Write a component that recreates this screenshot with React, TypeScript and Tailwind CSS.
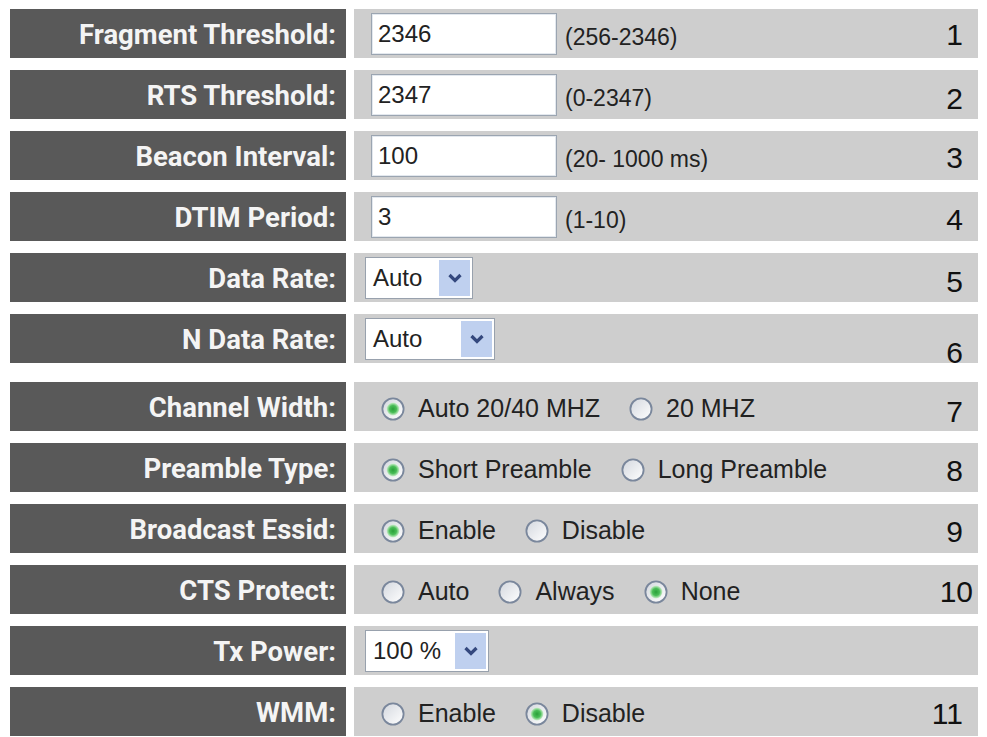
import React from 'react';

type Control =
  | { kind: 'text'; value: string; hint: string }
  | { kind: 'select'; value: string; width: string }
  | { kind: 'radio'; options: { label: string; checked: boolean }[] };

type Row = {
  label: string;
  control: Control;
  num?: string;
  numCls?: string;
  rowCls?: string;
};

const rows: Row[] = [
  { label: 'Fragment Threshold:', control: { kind: 'text', value: '2346', hint: '(256-2346)' }, num: '1', numCls: 'translate-y-[1px]' },
  { label: 'RTS Threshold:', control: { kind: 'text', value: '2347', hint: '(0-2347)' }, num: '2', numCls: 'translate-y-[4px]' },
  { label: 'Beacon Interval:', control: { kind: 'text', value: '100', hint: '(20- 1000 ms)' }, num: '3', numCls: 'translate-y-[2px]' },
  { label: 'DTIM Period:', control: { kind: 'text', value: '3', hint: '(1-10)' }, num: '4', numCls: 'translate-y-[3px]' },
  { label: 'Data Rate:', control: { kind: 'select', value: 'Auto', width: 'w-[108px]' }, num: '5', numCls: 'translate-y-[4px]' },
  { label: 'N Data Rate:', control: { kind: 'select', value: 'Auto', width: 'w-[130px]' }, num: '6', numCls: 'translate-y-[14px]' },
  {
    label: 'Channel Width:',
    control: { kind: 'radio', options: [{ label: 'Auto 20/40 MHZ', checked: true }, { label: '20 MHZ', checked: false }] },
    num: '7',
    numCls: 'translate-y-[5px]',
    rowCls: 'mt-[7px]',
  },
  {
    label: 'Preamble Type:',
    control: { kind: 'radio', options: [{ label: 'Short Preamble', checked: true }, { label: 'Long Preamble', checked: false }] },
    num: '8',
    numCls: 'translate-y-[3px]',
  },
  {
    label: 'Broadcast Essid:',
    control: { kind: 'radio', options: [{ label: 'Enable', checked: true }, { label: 'Disable', checked: false }] },
    num: '9',
    numCls: 'translate-y-[3px]',
  },
  {
    label: 'CTS Protect:',
    control: {
      kind: 'radio',
      options: [
        { label: 'Auto', checked: false },
        { label: 'Always', checked: false },
        { label: 'None', checked: true },
      ],
    },
    num: '10',
    numCls: 'translate-y-[2px] translate-x-[10px]',
  },
  { label: 'Tx Power:', control: { kind: 'select', value: '100 %', width: 'w-[124px]' } },
  {
    label: 'WMM:',
    control: { kind: 'radio', options: [{ label: 'Enable', checked: false }, { label: 'Disable', checked: true }] },
    num: '11',
    numCls: 'translate-y-[2px]',
  },
];

const Radio: React.FC<{ checked: boolean }> = ({ checked }) => (
  <svg width="24" height="24" viewBox="0 0 24 24" className="shrink-0">
    <defs>
      <linearGradient id="rfill" x1="0" y1="0" x2="1" y2="1">
        <stop offset="0" stopColor="#d3d7de" />
        <stop offset="1" stopColor="#ffffff" />
      </linearGradient>
      <radialGradient id="rdot" cx="0.5" cy="0.5" r="0.5">
        <stop offset="0" stopColor="#2a9f3a" />
        <stop offset="0.55" stopColor="#49bd57" />
        <stop offset="1" stopColor="#cdeecd" />
      </radialGradient>
    </defs>
    <circle cx="12" cy="12" r="10.6" fill="url(#rfill)" stroke="#7a879c" strokeWidth="1.8" />
    {checked && <circle cx="12" cy="12" r="6.4" fill="url(#rdot)" />}
  </svg>
);

const ValueCell: React.FC<{ control: Control }> = ({ control }) => {
  if (control.kind === 'text') {
    return (
      <div className="flex items-center ml-[6px]">
        <div className="w-[186px] h-[42px] bg-white border border-[#9ba5b1] shadow-[inset_0_0_0_1px_#e3e8ee] flex items-center pl-[6px] text-[24px]">
          {control.value}
        </div>
        <span className="ml-[8px] mt-[8px] text-[23px]">{control.hint}</span>
      </div>
    );
  }
  if (control.kind === 'select') {
    return (
      <div className={`${control.width} h-[42px] bg-white border border-[#98a1ad] flex items-stretch text-[24px]`}>
        <span className="flex-1 flex items-center pl-[7px]">{control.value}</span>
        <span className="w-[31px] m-[2px] bg-[#bfd0ef] flex items-center justify-center">
          <svg width="16" height="12" viewBox="0 0 16 12">
            <path d="M2.5 3 L8 8.5 L13.5 3" fill="none" stroke="#34487e" strokeWidth="3.2" />
          </svg>
        </span>
      </div>
    );
  }
  return (
    <div className="flex items-center gap-[29px] ml-[16px] mt-[4px] text-[25px]">
      {control.options.map((o) => (
        <label key={o.label} className="flex items-center gap-[13px]">
          <Radio checked={o.checked} />
          <span>{o.label}</span>
        </label>
      ))}
    </div>
  );
};

const App: React.FC = () => {
  return (
    <div className="w-[987px] h-[737px] bg-white pt-[9px] pl-[10px] overflow-hidden">
      <div className="w-[968px] flex flex-col gap-[12px]">
        {rows.map((row) => (
          <div key={row.label} className={`flex gap-[8px] h-[49px] ${row.rowCls ?? ''}`}>
            <div className="w-[336px] shrink-0 bg-[#595959] flex items-center justify-end pr-[10px] pt-[2px] text-[#f4f4f4] font-bold text-[27.5px] font-['Roboto',sans-serif]">
              {row.label}
            </div>
            <div className="flex-1 bg-[#cecece] flex items-center pl-[11px] pr-[15px] text-[#222] font-['Liberation_Sans',Arial,sans-serif]">
              <ValueCell control={row.control} />
              {row.num && (
                <span className={`ml-auto text-[30px] text-[#111] leading-none ${row.numCls ?? ''}`}>{row.num}</span>
              )}
            </div>
          </div>
        ))}
      </div>
    </div>
  );
};

export default App;
